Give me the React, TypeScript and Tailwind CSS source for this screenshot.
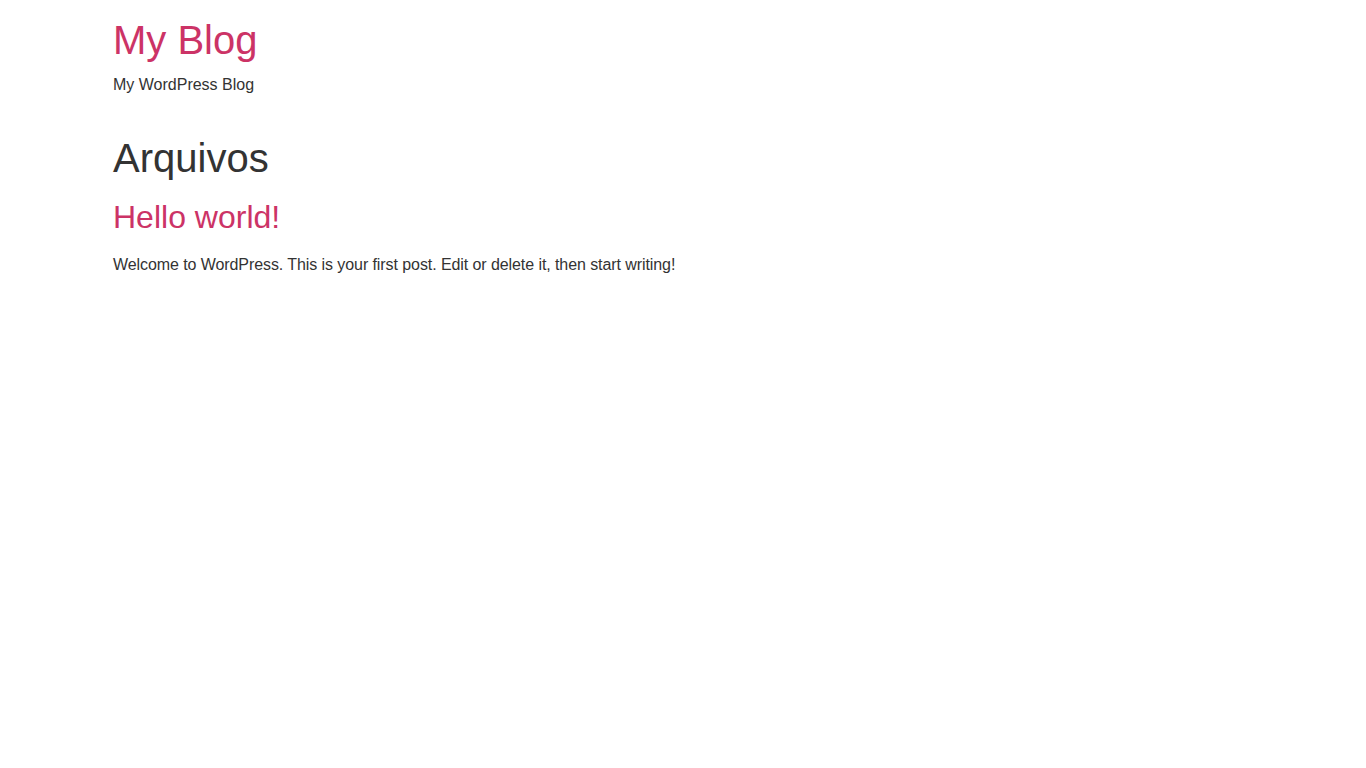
export default function App() {
  return (
    <div className="min-h-screen bg-white text-[#333333] font-['Liberation_Sans',Arial,sans-serif] text-base leading-[1.5]">
      <div className="max-w-[1140px] mx-auto">
        <header className="pt-[16px]">
          <h1 className="text-[40px] leading-[1.2] m-0">
            <a href="#" className="text-[#cc3366]">My Blog</a>
          </h1>
          <p className="mt-[9px] m-0">My WordPress Blog</p>
        </header>
        <main className="mt-[37px]">
          <h1 className="text-[40px] leading-[1.2] m-0">Arquivos</h1>
          <article className="mt-[16px]">
            <h2 className="text-[32px] leading-[1.2] m-0">
              <a href="#" className="text-[#cc3366]">Hello world!</a>
            </h2>
            <p className="mt-[17px] tracking-[-0.08px]">Welcome to WordPress. This is your first post. Edit or delete it, then start writing!</p>
          </article>
        </main>
      </div>
    </div>
  );
}
